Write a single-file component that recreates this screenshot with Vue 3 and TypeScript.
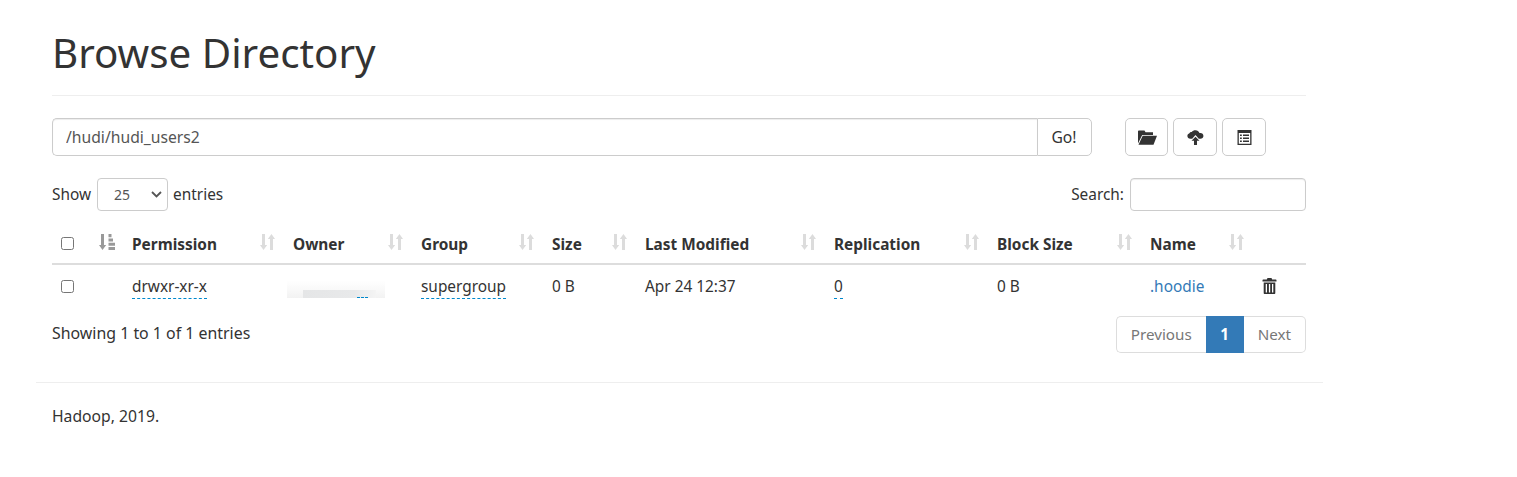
<template>
  <div class="page">
    <div class="page-header">
      <h1>Browse Directory</h1>
    </div>

    <div class="path-row">
      <div class="path-group">
        <input class="path-input" type="text" value="/hudi/hudi_users2" />
        <button class="go-btn">Go!</button>
      </div>
      <div class="tools">
        <button class="tool-btn t1" aria-label="Create directory">
          <svg width="20" height="15" viewBox="0 0 20 15"><path d="M1.800.5h5.700l1 1.800H16V5H5.200L1 13.500V1.300C1 .9 1.400.5 1.800.5zM5.700 5.700H20L16.500 14.800H1.500z" fill="#333" /></svg>
        </button>
        <button class="tool-btn t2" aria-label="Upload">
          <svg width="17" height="17" viewBox="0 0 18 17"><path d="M9 .8c2 0 3.600 1.200 4.200 3 .4-.1.7-.1 1-.1 1.800 0 3.200 1.400 3.200 3.100s-1.400 3-3.200 3H12.500L9 5.900 5.500 9.800H3.500C1.700 9.800.4 8.500.4 6.800c0-1.400.9-2.500 2.200-2.900C3 3 3.900 2.600 5 2.800 5.800 1.500 7.300.8 9 .8z" fill="#333" /><path d="M9 7.600l4.200 4.400h-2.600v4.400H7.400V12H4.800z" fill="#333" /></svg>
        </button>
        <button class="tool-btn t3" aria-label="Cut and paste">
          <svg width="15" height="15" viewBox="0 0 15 15"><path fill-rule="evenodd" d="M.5 0h14v15H.5zM1.800 3V13.800H13.200V3zM3 4.600h1.800v1.500H3zM6 4.600h6v1.500H6zM3 7.500h1.800V9H3zM6 7.500h6V9H6zM3 10.400h1.800v1.500H3zM6 10.400h6v1.500H6z" fill="#333" /></svg>
        </button>
      </div>
    </div>

    <div class="controls">
      <label class="length">
        Show
        <span class="select-box">
          <span class="select-val">25</span>
          <svg width="11" height="7" viewBox="0 0 11 7"><path d="M1 1l4.500 4.500L10 1" fill="none" stroke="#555" stroke-width="1.800" /></svg>
        </span>
        entries
      </label>
      <label class="search">
        Search:
        <input class="search-input" type="text" />
      </label>
    </div>

    <table class="files">
      <thead>
        <tr>
          <th class="col-check">
            <span class="check"></span>
            <svg class="sort first" width="16" height="16" viewBox="0 0 16 16"><path d="M2 0h3v11h2.200L3.500 16 0 11h2zM9.500 0h3v3.200h-3zM9.500 4.400h4.500v3.200H9.500zM9.500 8.800H16v3H9.500zM9.500 13H16v3H9.500z" fill="#999" /></svg>
          </th>
          <th v-for="col in columns" :key="col.name" :style="{ width: col.width + 'px' }">
            {{ col.name }}
            <svg class="sort" width="15" height="16" viewBox="0 0 15 16"><path d="M2 0h3v11h2.200L3.500 16 0 11h2zM10 5H7.800L11.500 0 15 5h-2v11h-3z" fill="#dcdcdc" /></svg>
          </th>
          <th></th>
        </tr>
      </thead>
      <tbody>
        <tr>
          <td class="col-check"><span class="check"></span></td>
          <td><span class="editable">drwxr-xr-x</span></td>
          <td class="owner">
            <span class="smudge"></span>
            <span class="dash-rest"></span>
          </td>
          <td><span class="editable">supergroup</span></td>
          <td>0 B</td>
          <td>Apr 24 12:37</td>
          <td><span class="editable">0</span></td>
          <td>0 B</td>
          <td><a class="link">.hoodie</a></td>
          <td>
            <svg class="trash" width="15" height="16" viewBox="0 0 15 16"><path fill-rule="evenodd" d="M5.500 0h4l.7 1.500h3.600c.4 0 .7.300.7.700v1.300H.5V2.200c0-.4.300-.7.700-.7h3.600zM1.700 4.500h11.600V15c0 .6-.4 1-1 1H2.700c-.6 0-1-.4-1-1zM3.700 6v8.500h1.300V6zM6.900 6v8.500h1.300V6zM10 6v8.500h1.300V6z" fill="#333" /></svg>
          </td>
        </tr>
      </tbody>
    </table>

    <div class="table-foot">
      <div class="info">Showing 1 to 1 of 1 entries</div>
      <div class="pager">
        <span class="page-item first-item">Previous</span>
        <span class="page-item current">1</span>
        <span class="page-item last-item">Next</span>
      </div>
    </div>

    <footer class="footer">Hadoop, 2019.</footer>
  </div>
</template>

<script setup lang="ts">
type Column = {
  name: string
  width: number
}

const columns: Column[] = [
  { name: 'Permission', width: 161 },
  { name: 'Owner', width: 128 },
  { name: 'Group', width: 131 },
  { name: 'Size', width: 93 },
  { name: 'Last Modified', width: 189 },
  { name: 'Replication', width: 163 },
  { name: 'Block Size', width: 153 },
  { name: 'Name', width: 112 }
]
</script>

<style>
body { background: #fff; }
</style>

<style scoped>
.page {
  box-sizing: border-box;
  width: 1287px;
  margin-left: 36px;
  font-family: "Noto Sans", "Open Sans", sans-serif;
  font-size: 15.7px;
  color: #333;
}

.page-header {
  margin: 0 17px 0 16px;
  padding-top: 24px;
  height: 96px;
  box-sizing: border-box;
  border-bottom: 1px solid #eee;
}
.page-header h1 {
  margin: 0;
  font-size: 40.3px;
  line-height: 58px;
  font-weight: 400;
}

.path-row {
  display: flex;
  margin: 22px 17px 0 16px;
}
.path-group { display: flex; width: 1040px; height: 38px; }
.path-input {
  box-sizing: border-box;
  width: 985px;
  height: 38px;
  border: 1px solid #ccc;
  border-right: none;
  border-radius: 5px 0 0 5px;
  padding: 0 13px;
  font: inherit;
  color: #555;
  outline: none;
  box-shadow: inset 0 1px 1px rgba(0, 0, 0, 0.075);
}
.go-btn {
  box-sizing: border-box;
  width: 55px;
  height: 38px;
  border: 1px solid #ccc;
  border-radius: 0 5px 5px 0;
  background: #fff;
  font: inherit;
  color: #333;
  padding: 0 1px 0 0;
}

.tools { display: flex; gap: 5px; margin-left: 33px; }
.tool-btn {
  box-sizing: border-box;
  height: 38px;
  border: 1px solid #ccc;
  border-radius: 5px;
  background: #fff;
  padding: 0;
  display: flex;
  align-items: center;
  justify-content: center;
}
.t1 { width: 43px; }
.t2 { width: 44px; }
.t3 { width: 44px; }

.controls {
  display: flex;
  justify-content: space-between;
  align-items: center;
  margin: 21px 17px 0 16px;
  height: 34px;
  font-size: 15.4px;
}
.length, .search { display: flex; align-items: center; }
.select-box {
  box-sizing: border-box;
  width: 71px;
  height: 33px;
  margin: 0 5px 0 6px;
  border: 1px solid #ccc;
  border-radius: 4px;
  display: flex;
  align-items: center;
  justify-content: space-between;
  padding: 0 5px 0 16px;
  color: #555;
  font-size: 14px;
}
.search-input {
  box-sizing: border-box;
  width: 176px;
  height: 33px;
  margin-left: 6px;
  border: 1px solid #ccc;
  border-radius: 4px;
  outline: none;
  box-shadow: inset 0 1px 1px rgba(0, 0, 0, 0.075);
}

.files {
  width: 1254px;
  margin: 15px 17px 0 16px;
  border-collapse: collapse;
  table-layout: fixed;
}
.files th {
  position: relative;
  box-sizing: border-box;
  height: 38px;
  padding: 0 8px;
  text-align: left;
  font-size: 15.4px;
  font-weight: 700;
  border-bottom: 2px solid #ddd;
  white-space: nowrap;
}
.files td {
  box-sizing: border-box;
  height: 43px;
  padding: 0 8px;
  font-size: 15.4px;
  white-space: nowrap;
}
.col-check { width: 72px; }
.check {
  display: block;
  box-sizing: border-box;
  width: 13px;
  height: 13px;
  margin-left: 1px;
  border: 1px solid #767676;
  border-radius: 2.5px;
  background: #fff;
}
th .check { margin-bottom: 3px; }
.sort {
  position: absolute;
  right: 10px;
  top: 8px;
}
.sort.first { right: 9px; }

.editable {
  border-bottom: 1px dashed #08c;
  padding-bottom: 1px;
}
.link { color: #337ab7; }
.trash { display: block; }

.owner { position: relative; }
.dash-rest {
  position: absolute;
  left: 72px;
  top: 32px;
  width: 11px;
  border-bottom: 1px dashed #08c;
}
.smudge {
  position: absolute;
  left: 2px;
  top: 8px;
  width: 98px;
  height: 25px;
  background:
    linear-gradient(to right, #e5e6e7, #e8e9ea 70%, #f4f4f4) 16px 17px / 73px 8px no-repeat,
    linear-gradient(to bottom, #fff 0 30%, #f8f8f8 70%, #f2f2f2 100%);
}

.table-foot {
  display: flex;
  justify-content: space-between;
  align-items: flex-start;
  margin: 9px 17px 0 16px;
  height: 66px;
}
.info { padding-top: 6px; font-size: 15.9px; }
.pager { display: flex; height: 37px; font-size: 15.2px; }
.page-item {
  box-sizing: border-box;
  height: 37px;
  display: flex;
  align-items: center;
  padding: 0 14px 2px;
  border: 1px solid #ddd;
  color: #777;
  background: #fff;
}
.first-item { border-radius: 5px 0 0 5px; border-right: none; }
.last-item { border-radius: 0 5px 5px 0; border-left: none; }
.current {
  width: 38px;
  justify-content: center;
  padding: 0 0 2px;
  background: #337ab7;
  border-color: #337ab7;
  color: #fff;
  font-weight: 700;
}

.footer {
  border-top: 1px solid #eee;
  padding: 22px 16px 0;
  height: 95px;
  box-sizing: border-box;
}
</style>
